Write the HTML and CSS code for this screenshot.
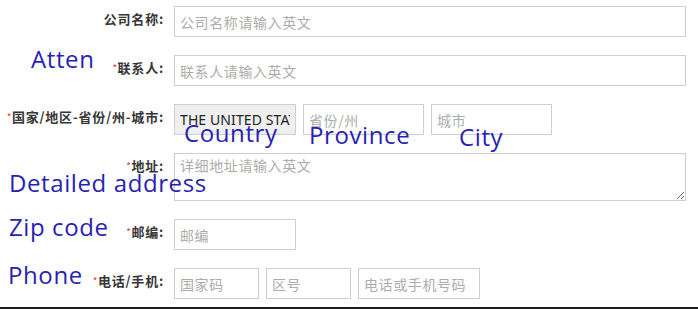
FILE: index.html
```html
<!DOCTYPE html>
<html lang="zh">
<head>
<meta charset="utf-8">
<title>Address form</title>
<link rel="stylesheet" href="styles.css">
</head>
<body>
<div class="page">
  <form class="form">
    <div class="row">
      <label class="label">公司名称:</label>
      <div class="field"><input class="input w-full" placeholder="公司名称请输入英文"></div>
    </div>
    <div class="row">
      <label class="label"><span class="req">*</span>联系人:</label>
      <div class="field"><input class="input w-full" placeholder="联系人请输入英文"></div>
    </div>
    <div class="row">
      <label class="label"><span class="req">*</span>国家/地区-省份/州-城市:</label>
      <div class="field">
        <select class="input select w-mid"><option>THE UNITED STATES</option></select>
        <input class="input w-121" placeholder="省份/州">
        <input class="input w-121" placeholder="城市">
      </div>
    </div>
    <div class="row">
      <label class="label"><span class="req">*</span>地址:</label>
      <div class="field"><textarea class="input textarea w-full" placeholder="详细地址请输入英文"></textarea></div>
    </div>
    <div class="row">
      <label class="label"><span class="req">*</span>邮编:</label>
      <div class="field"><input class="input w-mid" placeholder="邮编"></div>
    </div>
    <div class="row">
      <label class="label"><span class="req">*</span>电话/手机:</label>
      <div class="field">
        <input class="input w-sm" placeholder="国家码">
        <input class="input w-sm" placeholder="区号">
        <input class="input w-mid" placeholder="电话或手机号码">
      </div>
    </div>
  </form>
  <div class="rule"></div>

  <span class="note note-atten">Atten</span>
  <span class="note note-country">Country</span>
  <span class="note note-province">Province</span>
  <span class="note note-city">City</span>
  <span class="note note-address">Detailed address</span>
  <span class="note note-zip">Zip code</span>
  <span class="note note-phone">Phone</span>
</div>
</body>
</html>
```
FILE: styles.css
```css
html, body {
  margin: 0;
  padding: 0;
  background: #ffffff;
}

body {
  font-family: "Noto Sans", "Noto Sans CJK SC", sans-serif;
}

.page {
  position: relative;
  width: 698px;
  height: 309px;
  box-sizing: border-box;
  padding-top: 6px;
  overflow: hidden;
}

.form {
  display: flex;
  flex-direction: column;
  gap: 18px;
  margin: 0;
}

.row {
  display: grid;
  grid-template-columns: 164px 1fr;
  column-gap: 10px;
  align-items: start;
}

.label {
  text-align: right;
  font-family: "Noto Sans CJK SC", sans-serif;
  font-size: 13px;
  font-weight: bold;
  color: #363636;
  line-height: 15px;
  padding-top: 5px;
  letter-spacing: 0.8px;
  white-space: nowrap;
}

.req {
  color: #e03a3a;
  font-size: 10px;
  font-weight: normal;
  letter-spacing: 0.5px;
  vertical-align: 1px;
}

.field {
  display: flex;
  gap: 7px;
}

.input {
  height: 31px;
  box-sizing: border-box;
  border: 1px solid #cfcfcf;
  border-radius: 0;
  padding: 0 5px;
  margin: 0;
  font-family: "Noto Sans CJK SC", sans-serif;
  font-size: 14px;
  color: #333333;
  background: #ffffff;
  outline: none;
}

.input::placeholder {
  color: #acacac;
  letter-spacing: 0.6px;
  opacity: 1;
}

.w-full { width: 512px; }
.w-mid { width: 122px; }
.w-121 { width: 121px; }
.w-sm { width: 85px; }

.select {
  appearance: none;
  -webkit-appearance: none;
  background: #efefef;
  color: #222222;
  font-family: "Noto Sans", sans-serif;
  font-size: 14px;
  letter-spacing: 0.1px;
  padding: 0 5px;
}

.textarea {
  height: 48px;
  padding: 2px 5px;
  line-height: 18px;
  resize: both;
}

.rule {
  margin-top: 8px;
  height: 2px;
  background: #1c1c1c;
}

.note {
  position: absolute;
  font-family: "Open Sans", sans-serif;
  font-size: 24px;
  line-height: 18px;
  color: #2a1fb0;
  letter-spacing: 0.6px;
  white-space: nowrap;
}

.note-atten { left: 31px; top: 50px; }
.note-country { left: 184px; top: 124px; }
.note-province { left: 309px; top: 126px; }
.note-city { left: 459px; top: 128px; }
.note-address { left: 9px; top: 174px; }
.note-zip { left: 9px; top: 218px; }
.note-phone { left: 8px; top: 266px; }
```
